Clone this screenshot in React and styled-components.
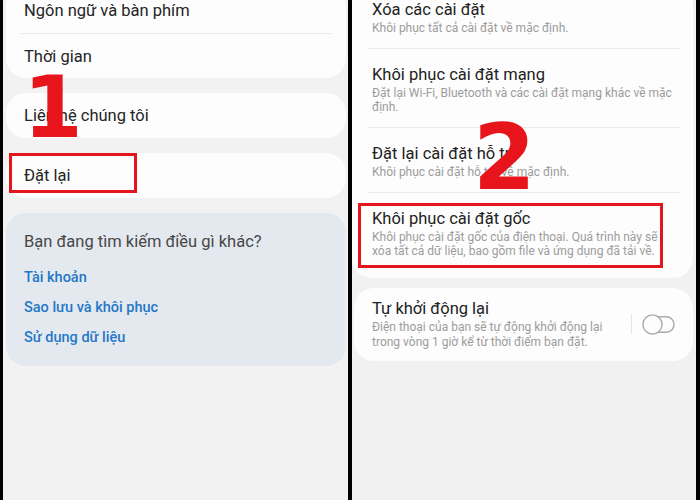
import React from "react";
import styled, { createGlobalStyle } from "styled-components";

const Global = createGlobalStyle`
  html, body { margin: 0; padding: 0; background: #000; }
  body { font-family: Roboto, "Noto Sans", "Liberation Sans", sans-serif; }
`;

const Frame = styled.div`
  width: 700px;
  height: 500px;
  display: flex;
  background: #000;
  overflow: hidden;
`;

const LeftPhone = styled.div`
  position: relative;
  width: 340px;
  margin-left: 3px;
  padding: 0 2px 0 3px;
  background: #f2f2f2;
  display: flex;
  flex-direction: column;
  gap: 15px;
  overflow: hidden;
`;

const RightPhone = styled.div`
  position: relative;
  flex: 1;
  margin-left: 4px;
  margin-right: 4px;
  padding: 0 3px 0 0;
  background: #f1f1f1;
  display: flex;
  flex-direction: column;
  gap: 10px;
  overflow: hidden;
`;

const Card = styled.div`
  position: relative;
  background: #fdfdfd;
  border-radius: 20px;
  margin-top: ${(p) => p.$offset || 0}px;
  padding-bottom: ${(p) => p.$padBottom || 0}px;
`;

const MenuRow = styled.div`
  height: ${(p) => p.$h || 46}px;
  display: flex;
  align-items: center;
  padding: 0 18px;
  font-size: 16.5px;
  color: #242424;
`;

const Sep = styled.div`
  height: 1px;
  background: #e9e9e9;
  margin: 0 ${(p) => p.$r}px 0 ${(p) => p.$l}px;
`;

const HelpCard = styled.div`
  background: #e4e9ef;
  border-radius: 20px;
  padding: 17px 18px 13px;
  display: flex;
  flex-direction: column;
`;

const HelpTitle = styled.div`
  font-size: 16.5px;
  line-height: 24px;
  color: #474747;
  margin-bottom: 9px;
`;

const HelpLink = styled.div`
  font-size: 14.5px;
  line-height: 30px;
  font-weight: 500;
  color: #2478c6;
`;

const Highlight = styled.div`
  position: absolute;
  left: ${(p) => p.$x}px;
  top: ${(p) => p.$y}px;
  width: ${(p) => p.$w}px;
  height: ${(p) => p.$h}px;
  border: 3px solid #e3151d;
  box-sizing: border-box;
  pointer-events: none;
`;

const StepNumber = styled.div`
  position: absolute;
  left: ${(p) => p.$x}px;
  top: ${(p) => p.$y}px;
  font-family: "DejaVu Sans", sans-serif;
  font-weight: 700;
  font-size: ${(p) => p.$size}px;
  line-height: 1;
  color: #e8141c;
  pointer-events: none;
`;

const SettingRow = styled.div`
  position: relative;
  padding: 15px 20px 13px;
`;

const Title = styled.div`
  font-size: 16.5px;
  line-height: 22px;
  color: #222;
  white-space: nowrap;
`;

const Sub = styled.div`
  font-size: 12px;
  line-height: ${(p) => p.$lh || 14}px;
  color: #9c9c9c;
  white-space: nowrap;
`;

const ToggleCard = styled.div`
  background: #fdfdfd;
  border-radius: 20px;
  margin-left: 2px;
  display: flex;
  align-items: center;
  padding: 10px 18px 11px 18px;
`;

const ToggleText = styled.div`
  flex: 1;
`;

const VLine = styled.div`
  width: 1px;
  height: 20px;
  background: #e6e6e6;
  margin-right: 10px;
`;

const Toggle = () => (
  <svg width="33" height="21" viewBox="0 0 33 21">
    <rect x="6" y="2.75" width="26" height="15.5" rx="7.75" fill="none" stroke="#a9a9a9" strokeWidth="1.4" />
    <circle cx="10.5" cy="10.5" r="9.6" fill="#fdfdfd" stroke="#a9a9a9" strokeWidth="1.4" />
  </svg>
);

export default function App() {
  return (
    <>
      <Global />
      <Frame>
        <LeftPhone>
          <Card $offset={-13}>
            <MenuRow>Ngôn ngữ và bàn phím</MenuRow>
            <Sep $l={14} $r={14} />
            <MenuRow $h={44}>Thời gian</MenuRow>
          </Card>
          <Card>
            <MenuRow $h={45}>Liên hệ chúng tôi</MenuRow>
          </Card>
          <Card>
            <MenuRow $h={45}>Đặt lại</MenuRow>
            <Highlight $x={3} $y={0} $w={128} $h={40} />
          </Card>
          <HelpCard>
            <HelpTitle>Bạn đang tìm kiếm điều gì khác?</HelpTitle>
            <HelpLink>Tài khoản</HelpLink>
            <HelpLink>Sao lưu và khôi phục</HelpLink>
            <HelpLink>Sử dụng dữ liệu</HelpLink>
          </HelpCard>
          <StepNumber $x={20} $y={64} $size={86}>1</StepNumber>
        </LeftPhone>
        <RightPhone>
          <Card $offset={-16} $padBottom={7}>
            <SettingRow>
              <Title>Xóa các cài đặt</Title>
              <Sub>Khôi phục tất cả cài đặt về mặc định.</Sub>
            </SettingRow>
            <Sep $l={16} $r={13} />
            <SettingRow>
              <Title>Khôi phục cài đặt mạng</Title>
              <Sub>Đặt lại Wi-Fi, Bluetooth và các cài đặt mạng khác về mặc</Sub>
              <Sub>định.</Sub>
            </SettingRow>
            <Sep $l={16} $r={13} />
            <SettingRow>
              <Title>Đặt lại cài đặt hỗ trợ</Title>
              <Sub>Khôi phục cài đặt hỗ trợ về mặc định.</Sub>
            </SettingRow>
            <Sep $l={16} $r={13} />
            <SettingRow>
              <Title>Khôi phục cài đặt gốc</Title>
              <Sub>Khôi phục cài đặt gốc của điện thoại. Quá trình này sẽ</Sub>
              <Sub>xóa tất cả dữ liệu, bao gồm file và ứng dụng đã tải về.</Sub>
              <Highlight $x={6} $y={10} $w={305} $h={65} />
            </SettingRow>
          </Card>
          <ToggleCard>
            <ToggleText>
              <Title>Tự khởi động lại</Title>
              <Sub $lh={15}>Điện thoại của bạn sẽ tự động khởi động lại</Sub>
              <Sub $lh={15}>trong vòng 1 giờ kể từ thời điểm bạn đặt.</Sub>
            </ToggleText>
            <VLine />
            <Toggle />
          </ToggleCard>
          <StepNumber $x={121} $y={113} $size={90}>2</StepNumber>
        </RightPhone>
      </Frame>
    </>
  );
}
